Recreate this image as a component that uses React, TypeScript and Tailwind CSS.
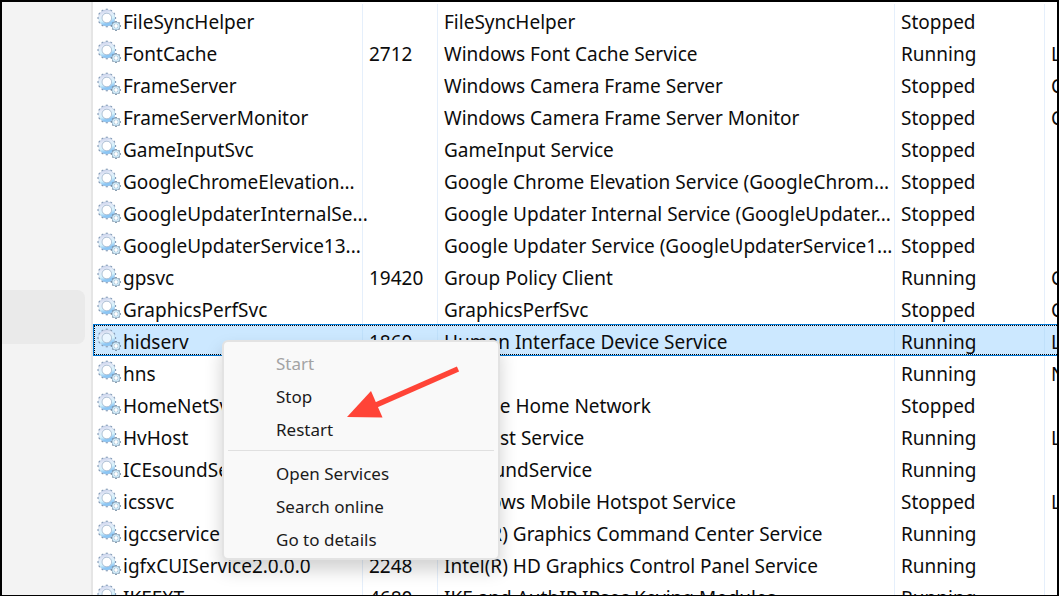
type Service = {
  name: string;
  pid?: string;
  description: string;
  status: "Running" | "Stopped";
  group?: string;
  selected?: boolean;
};

const services: Service[] = [
  { name: "FileSyncHelper", description: "FileSyncHelper", status: "Stopped" },
  { name: "FontCache", pid: "2712", description: "Windows Font Cache Service", status: "Running", group: "L" },
  { name: "FrameServer", description: "Windows Camera Frame Server", status: "Stopped", group: "C" },
  { name: "FrameServerMonitor", description: "Windows Camera Frame Server Monitor", status: "Stopped", group: "C" },
  { name: "GameInputSvc", description: "GameInput Service", status: "Stopped" },
  { name: "GoogleChromeElevation...", description: "Google Chrome Elevation Service (GoogleChrom...", status: "Stopped" },
  { name: "GoogleUpdaterInternalSe...", description: "Google Updater Internal Service (GoogleUpdater...", status: "Stopped" },
  { name: "GoogleUpdaterService13...", description: "Google Updater Service (GoogleUpdaterService1...", status: "Stopped" },
  { name: "gpsvc", pid: "19420", description: "Group Policy Client", status: "Running", group: "C" },
  { name: "GraphicsPerfSvc", description: "GraphicsPerfSvc", status: "Stopped", group: "C" },
  { name: "hidserv", pid: "1860", description: "Human Interface Device Service", status: "Running", group: "L", selected: true },
  { name: "hns", description: "hns", status: "Running", group: "N" },
  { name: "HomeNetSvc", description: "McAfee Home Network", status: "Stopped" },
  { name: "HvHost", description: "HV Host Service", status: "Running", group: "L" },
  { name: "ICEsoundService", description: "ICEsoundService", status: "Running" },
  { name: "icssvc", description: "Windows Mobile Hotspot Service", status: "Stopped", group: "L" },
  { name: "igccservice", description: "Intel(R) Graphics Command Center Service", status: "Running" },
  { name: "igfxCUIService2.0.0.0", pid: "2248", description: "Intel(R) HD Graphics Control Panel Service", status: "Running" },
  { name: "IKEEXT", pid: "4680", description: "IKE and AuthIP IPsec Keying Modules", status: "Running" },
];

const teeth = [0, 30, 60, 90, 120, 150, 180, 210, 240, 270, 300, 330];
const smallTeeth = [0, 45, 90, 135, 180, 225, 270, 315];

function GearDefs() {
  return (
    <svg className="absolute size-0" aria-hidden="true">
      <defs>
        <linearGradient id="gear" x1="0" y1="0" x2="0.3" y2="1">
          <stop offset="0" stopColor="#cfd6ee" />
          <stop offset="0.3" stopColor="#e4ebf8" />
          <stop offset="0.7" stopColor="#d6f3fc" />
          <stop offset="1" stopColor="#8cc6f4" />
        </linearGradient>
      </defs>
    </svg>
  );
}

function GearsIcon() {
  return (
    <svg className="h-7 w-6 shrink-0" viewBox="0 -2 24 28" fill="none" aria-hidden="true">
      {teeth.map((a) => (
        <rect key={a} x="8.8" y="0.7" width="2" height="3" fill="#7f96b2" transform={`rotate(${a} 9.8 10)`} />
      ))}
      <circle cx="9.8" cy="10" r="6.500" stroke="#b3c5db" strokeWidth="3.8" />
      <circle cx="9.8" cy="10" r="6.500" stroke="url(#gear)" strokeWidth="3.2" />
      <circle cx="9.8" cy="10" r="4.800" fill="#fff" fillOpacity="0.6" stroke="#9fb4cc" strokeWidth="0.7" />
      {smallTeeth.map((a) => (
        <rect key={a} x="18.2" y="13" width="1.6" height="2" fill="#6f889f" transform={`rotate(${a} 19 18)`} />
      ))}
      <circle cx="19" cy="18" r="3" fill="#fff" stroke="#8aa5bd" strokeWidth="2.2" />
      <circle cx="19" cy="18" r="2.9" stroke="#d2edfa" strokeWidth="1.4" />
    </svg>
  );
}

function ServiceRow({ service }: { service: Service }) {
  return (
    <tr
      aria-selected={service.selected}
      className={service.selected ? "relative h-8 bg-[#cce8ff] *:border-[#bfe0fb]" : "h-8 *:border-[#e5effb]"}
    >
      <td className="border-r pl-1 whitespace-nowrap">
        <span className="flex items-end gap-0.5">
          <GearsIcon />
          {service.name}
        </span>
        {service.selected && (
          <span className="absolute inset-0 border-y border-l border-[#0078d7]">
            <span className="block h-full border-y border-l border-dotted border-black" />
          </span>
        )}
      </td>
      <td className="overflow-hidden border-r pt-1 pl-1.5 whitespace-nowrap">{service.pid}</td>
      <td className="overflow-hidden border-r pt-1 pl-1.5 whitespace-nowrap">{service.description}</td>
      <td className="overflow-hidden border-r pt-1 pl-1.5 whitespace-nowrap">{service.status}</td>
      <td className="overflow-hidden pt-1 pl-1.5 whitespace-nowrap">{service.group}</td>
    </tr>
  );
}

function MenuItem({ label, disabled }: { label: string; disabled?: boolean }) {
  return (
    <button
      type="button"
      role="menuitem"
      disabled={disabled}
      className="block h-8 w-full pl-12 text-left text-[#1b1b1b] disabled:text-[#a3a3a3]"
    >
      {label}
    </button>
  );
}

function ContextMenu() {
  return (
    <div
      role="menu"
      className="absolute top-[338px] left-[220px] w-[278px] rounded-md border-2 border-[#e3e3e3] bg-[#f9f9f9] px-1 pt-1.5 pb-0.5 text-[17px] shadow-[0_10px_18px_rgba(0,0,0,0.18)]"
    >
      <div className="flex flex-col gap-px">
        <MenuItem label="Start" disabled />
        <MenuItem label="Stop" />
        <MenuItem label="Restart" />
      </div>
      <hr className="mt-1 mb-[7px] border-[#e0e0e0]" />
      <div className="flex flex-col gap-px">
        <MenuItem label="Open Services" />
        <MenuItem label="Search online" />
        <MenuItem label="Go to details" />
      </div>
    </div>
  );
}

function Arrow() {
  return (
    <svg className="absolute top-[364px] left-[344px]" width="116" height="56" viewBox="346 366 116 56" aria-hidden="true">
      <path d="M458 369 L376 405" stroke="#ff4437" strokeWidth="5.5" />
      <path d="M347 417 L371 391 L382.500 417.500 Z" fill="#ff4437" />
    </svg>
  );
}

export default function App() {
  return (
    <div className="relative flex h-screen overflow-hidden border-2 border-b-1 border-black bg-white font-['Noto_Sans','Open_Sans',sans-serif] text-[19px] leading-6 text-[#0c0c0c]">
      <GearDefs />
      <aside className="w-[91px] shrink-0 border-r-2 border-[#e5e5e5] bg-[#f3f3f3] pt-72">
        <div className="h-[54px] w-[83px] rounded-r-lg bg-[#eaeaea]" />
      </aside>
      <main className="min-w-0 flex-1 pt-0.5">
        <table className="w-full table-fixed border-separate border-spacing-0">
          <colgroup>
            <col className="w-[270px]" />
            <col className="w-[75px]" />
            <col />
            <col className="w-[150px]" />
            <col className="w-[12px]" />
          </colgroup>
          <tbody>
            {services.map((s) => (
              <ServiceRow key={s.name} service={s} />
            ))}
          </tbody>
        </table>
      </main>
      <ContextMenu />
      <Arrow />
    </div>
  );
}
